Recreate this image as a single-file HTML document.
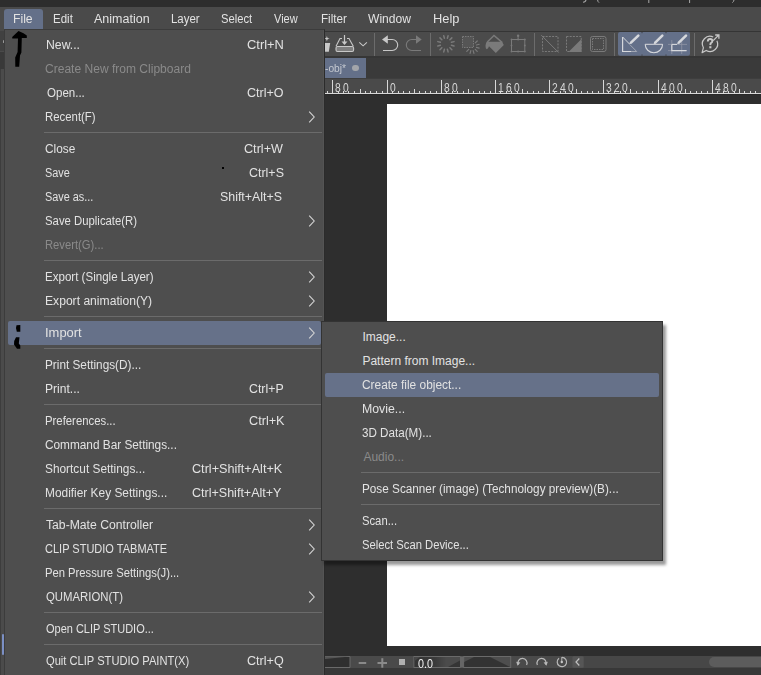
<!DOCTYPE html>
<html><head><meta charset="utf-8"><style>
html,body{margin:0;padding:0;width:761px;height:675px;overflow:hidden;background:#2e2e2e;position:relative}
body>div{position:absolute}
.t{font-family:"Liberation Sans", sans-serif;font-size:12px;line-height:14px;color:#e2e2e2;white-space:nowrap}
.r{font-family:"Liberation Sans",sans-serif;font-size:12.5px;line-height:12px;color:#d8d8d8;white-space:nowrap;transform:scaleX(0.82);transform-origin:0 0}
.z{font-family:"Liberation Sans",sans-serif;font-size:12.5px;line-height:12px;color:#f0f0f0;white-space:nowrap;transform:scaleX(0.86);transform-origin:0 0}
svg{display:block}
</style></head><body>
<div style="left:0px;top:0px;width:761px;height:7px;background:#2d2d2d"></div><div style="left:0px;top:7px;width:761px;height:24px;background:#4a4a4a"></div><div style="left:0px;top:31px;width:761px;height:1px;background:#353535"></div><div style="left:0px;top:32px;width:761px;height:24px;background:#4b4b4b"></div><div style="left:0px;top:56px;width:761px;height:2px;background:#363636"></div><div style="left:0px;top:58px;width:761px;height:20px;background:#3a3a3a"></div><div style="left:325px;top:58px;width:41px;height:20px;background:#647089"></div><div style="left:0px;top:78px;width:761px;height:1px;background:#3e3e3e"></div><div style="left:0px;top:79px;width:761px;height:14px;background:#4a4a4a"></div><div style="left:0px;top:93px;width:761px;height:1px;background:#d8d8d8"></div><div style="left:0px;top:94px;width:761px;height:562px;background:#2e2e2e"></div><div style="left:0px;top:94px;width:761px;height:1px;background:#282828"></div><div style="left:387px;top:104px;width:374px;height:542px;background:#ffffff"></div><div style="left:0px;top:656px;width:761px;height:12px;background:#4a4a4a"></div><div style="left:0px;top:668px;width:761px;height:7px;background:#383838"></div><svg style="position:absolute;left:0;top:0" width="761" height="8" viewBox="0 0 761 8"><path d="M586 0 Q585.5 2.2 583 2.2" fill="none" stroke="#a8a8a8" stroke-width="1.1"/><path d="M597.6 0 Q597.8 1.8 599 2.6" fill="none" stroke="#a8a8a8" stroke-width="1"/><path d="M648.8 0 L648.8 3 M689.6 0 L689.6 3" fill="none" stroke="#a8a8a8" stroke-width="1"/><path d="M734 0 Q733.6 1.8 732.4 2.6" fill="none" stroke="#a8a8a8" stroke-width="1"/></svg><div class="t" style="left:53.34px;top:12px;transform:scaleX(0.9600);transform-origin:0 0;">Edit</div><div class="t" style="left:94.00px;top:12px;transform:scaleX(1.0415);transform-origin:0 0;">Animation</div><div class="t" style="left:171.04px;top:12px;transform:scaleX(0.9552);transform-origin:0 0;">Layer</div><div class="t" style="left:220.67px;top:12px;transform:scaleX(0.9344);transform-origin:0 0;">Select</div><div class="t" style="left:274.30px;top:12px;transform:scaleX(0.9192);transform-origin:0 0;">View</div><div class="t" style="left:320.63px;top:12px;transform:scaleX(0.9692);transform-origin:0 0;">Filter</div><div class="t" style="left:368.30px;top:12px;transform:scaleX(1.0047);transform-origin:0 0;">Window</div><div class="t" style="left:432.53px;top:12px;transform:scaleX(1.0696);transform-origin:0 0;">Help</div><div class="t" style="left:325px;top:61px;color:#c4c8d0;font-size:11px;transform:scaleX(0.93);transform-origin:0 0">-obj*</div><div style="left:352.4px;top:64.9px;width:6.2px;height:6.2px;border-radius:50%;background:#a3a5aa"></div><div class="r" style="left:335.4px;top:82px">8</div><div class="r" style="left:343.4px;top:82px">0</div><div class="r" style="left:390.4px;top:82px">0</div><div class="r" style="left:444.4px;top:82px">8</div><div class="r" style="left:452.4px;top:82px">0</div><div class="r" style="left:498.4px;top:82px">1</div><div class="r" style="left:506.4px;top:82px">6</div><div class="r" style="left:514.4px;top:82px">0</div><div class="r" style="left:552.4px;top:82px">2</div><div class="r" style="left:560.4px;top:82px">4</div><div class="r" style="left:568.4px;top:82px">0</div><div class="r" style="left:606.4px;top:82px">3</div><div class="r" style="left:614.4px;top:82px">2</div><div class="r" style="left:622.4px;top:82px">0</div><div class="r" style="left:661.4px;top:82px">4</div><div class="r" style="left:669.4px;top:82px">0</div><div class="r" style="left:677.4px;top:82px">0</div><div class="r" style="left:715.4px;top:82px">4</div><div class="r" style="left:723.4px;top:82px">8</div><div class="r" style="left:731.4px;top:82px">0</div><svg style="position:absolute;left:0;top:0" width="761" height="675" viewBox="0 0 761 675"><line x1="374.5" y1="33" x2="374.5" y2="56" stroke="#6c6c6c" stroke-width="1"/><line x1="430.5" y1="33" x2="430.5" y2="56" stroke="#6c6c6c" stroke-width="1"/><line x1="534.5" y1="33" x2="534.5" y2="56" stroke="#6c6c6c" stroke-width="1"/><line x1="614.5" y1="33" x2="614.5" y2="56" stroke="#6c6c6c" stroke-width="1"/><line x1="694.5" y1="33" x2="694.5" y2="56" stroke="#6c6c6c" stroke-width="1"/><path d="M326.9 36 L327.6 38 L329.6 38.6 L327.6 39.3 L326.9 41.3 L326.2 39.3 L324.2 38.6 L326.2 38 Z" fill="#c8c8c8"/><path d="M325 43 L330.2 43 L328.8 51.7 L325 51.7 Z" fill="#c8c8c8"/><line x1="344.5" y1="35" x2="344.5" y2="43" stroke="#c8c8c8" stroke-width="1.2"/><path d="M341.5 41.5 L347.5 41.5 L344.5 45 Z" fill="#c8c8c8"/><path d="M342 38.5 L340 38.5 L336 46.2 M347 38.5 L349 38.5 L353.3 46.2" fill="none" stroke="#c8c8c8" stroke-width="1.1"/><rect x="336" y="46.5" width="17.6" height="5" rx="1.5" fill="#7e7e7e" stroke="#c8c8c8" stroke-width="1.1"/><path d="M359.3 42.3 L363.1 45.8 L366.9 42.3" fill="none" stroke="#c8c8c8" stroke-width="1.1"/><path d="M382 39.5 L387.8 35.2 L387.8 43.8 Z" fill="#c8c8c8"/><path d="M387 39.5 L392.2 39.5 A5.5 5.5 0 0 1 392.2 50.5 L383 50.5" fill="none" stroke="#c8c8c8" stroke-width="1.1"/><path d="M421.7 39.5 L416 35.2 L416 43.8 Z" fill="#7a7a7a"/><path d="M417 39.5 L411.8 39.5 A5.5 5.5 0 0 0 411.8 50.5 L421 50.5" fill="none" stroke="#7a7a7a" stroke-width="1.1"/><line x1="451.41" y1="45.28" x2="454.01" y2="45.97" stroke="#7a7a7a" stroke-width="1.5" stroke-linecap="round"/><line x1="449.93" y1="47.83" x2="451.84" y2="49.74" stroke="#7a7a7a" stroke-width="1.5" stroke-linecap="round"/><line x1="447.38" y1="49.31" x2="448.07" y2="51.91" stroke="#7a7a7a" stroke-width="1.5" stroke-linecap="round"/><line x1="444.42" y1="49.31" x2="443.73" y2="51.91" stroke="#7a7a7a" stroke-width="1.5" stroke-linecap="round"/><line x1="441.87" y1="47.83" x2="439.96" y2="49.74" stroke="#7a7a7a" stroke-width="1.5" stroke-linecap="round"/><line x1="440.39" y1="45.28" x2="437.79" y2="45.97" stroke="#7a7a7a" stroke-width="1.5" stroke-linecap="round"/><line x1="440.39" y1="42.32" x2="437.79" y2="41.63" stroke="#7a7a7a" stroke-width="1.5" stroke-linecap="round"/><line x1="441.87" y1="39.77" x2="439.96" y2="37.86" stroke="#7a7a7a" stroke-width="1.5" stroke-linecap="round"/><line x1="444.42" y1="38.29" x2="443.73" y2="35.69" stroke="#7a7a7a" stroke-width="1.5" stroke-linecap="round"/><line x1="447.38" y1="38.29" x2="448.07" y2="35.69" stroke="#7a7a7a" stroke-width="1.5" stroke-linecap="round"/><line x1="449.93" y1="39.77" x2="451.84" y2="37.86" stroke="#7a7a7a" stroke-width="1.5" stroke-linecap="round"/><line x1="451.41" y1="42.32" x2="454.01" y2="41.63" stroke="#7a7a7a" stroke-width="1.5" stroke-linecap="round"/><line x1="475.25" y1="42.95" x2="477.23" y2="40.97" stroke="#7a7a7a" stroke-width="1.2" stroke-linecap="round"/><line x1="476.44" y1="45.01" x2="479.15" y2="44.28" stroke="#7a7a7a" stroke-width="1.2" stroke-linecap="round"/><line x1="476.44" y1="47.39" x2="479.15" y2="48.12" stroke="#7a7a7a" stroke-width="1.2" stroke-linecap="round"/><line x1="475.25" y1="49.45" x2="477.23" y2="51.43" stroke="#7a7a7a" stroke-width="1.2" stroke-linecap="round"/><line x1="473.19" y1="50.64" x2="473.92" y2="53.35" stroke="#7a7a7a" stroke-width="1.2" stroke-linecap="round"/><line x1="470.81" y1="50.64" x2="470.08" y2="53.35" stroke="#7a7a7a" stroke-width="1.2" stroke-linecap="round"/><line x1="468.75" y1="49.45" x2="466.77" y2="51.43" stroke="#7a7a7a" stroke-width="1.2" stroke-linecap="round"/><rect x="462.5" y="36.5" width="11" height="11" fill="#555" stroke="#7a7a7a" stroke-width="1" stroke-dasharray="1.5 1"/><path d="M487.3 42 L494 35.4 L502.3 42.6" fill="none" stroke="#7a7a7a" stroke-width="1.4"/><path d="M486.6 41.8 L502 41.8 L503.8 45 L495.8 53 L489 46.2 Q487.5 50.5 486 48.5 Q484.8 46 486.6 41.8 Z" fill="#7a7a7a"/><rect x="511.5" y="39.5" width="13.3" height="12" fill="none" stroke="#7a7a7a" stroke-width="1"/><line x1="518.1" y1="36" x2="518.1" y2="39.5" stroke="#7a7a7a" stroke-width="1"/><circle cx="518.1" cy="35.7" r="1.2" fill="#7a7a7a"/><circle cx="511.5" cy="39.5" r="0.9" fill="#7a7a7a"/><circle cx="518.1" cy="39.5" r="0.9" fill="#7a7a7a"/><circle cx="524.8" cy="39.5" r="0.9" fill="#7a7a7a"/><circle cx="511.5" cy="45.5" r="0.9" fill="#7a7a7a"/><circle cx="524.8" cy="45.5" r="0.9" fill="#7a7a7a"/><circle cx="511.5" cy="51.5" r="0.9" fill="#7a7a7a"/><circle cx="518.1" cy="51.5" r="0.9" fill="#7a7a7a"/><circle cx="524.8" cy="51.5" r="0.9" fill="#7a7a7a"/><rect x="542.5" y="36.5" width="15.5" height="15" fill="none" stroke="#7a7a7a" stroke-width="1" stroke-dasharray="2 1.2"/><line x1="541.3" y1="35.2" x2="558.6" y2="52.5" stroke="#7a7a7a" stroke-width="1"/><rect x="566.5" y="36.5" width="14.7" height="15" fill="none" stroke="#7a7a7a" stroke-width="1" stroke-dasharray="2 1.2"/><path d="M581.5 39 L581.5 52 L568.5 52 Z" fill="#7a7a7a"/><rect x="590.5" y="36.5" width="15.5" height="15" rx="2" fill="none" stroke="#7a7a7a" stroke-width="1"/><rect x="592.5" y="38.5" width="11" height="11" fill="none" stroke="#7a7a7a" stroke-width="1" stroke-dasharray="1.5 1"/><rect x="618" y="32" width="72" height="23.7" rx="2" fill="#647089"/><rect x="641.5" y="32" width="1" height="1.2" fill="#3d3f45"/><rect x="641.5" y="54.5" width="1" height="1.2" fill="#3d3f45"/><rect x="665.5" y="32" width="1" height="1.2" fill="#3d3f45"/><rect x="665.5" y="54.5" width="1" height="1.2" fill="#3d3f45"/><path d="M622.6 37 L622.6 51.5 L631 51.5" fill="none" stroke="#d6d8dc" stroke-width="1.2"/><path d="M631 51.5 L636.7 51.5 L629.5 44.3" fill="none" stroke="#a8adb8" stroke-width="0.9"/><line x1="622.6" y1="37" x2="629.5" y2="44" stroke="#d6d8dc" stroke-width="1"/><line x1="638.3" y1="35.6" x2="631" y2="42.6" stroke="#d6d8dc" stroke-width="2.6" stroke-linecap="round"/><line x1="631" y1="42.6" x2="629.6" y2="44.0" stroke="#d6d8dc" stroke-width="1"/><path d="M645.2 44.3 L654 44.3 M654 44.3 L662.6 44.3" fill="none" stroke="#d6d8dc" stroke-width="1"/><path d="M645.2 44.3 A8.7 8.4 0 0 0 662.6 44.3" fill="none" stroke="#d6d8dc" stroke-width="1.1"/><line x1="662.3" y1="35.6" x2="655.2" y2="42.6" stroke="#d6d8dc" stroke-width="2.6" stroke-linecap="round"/><line x1="655.2" y1="42.6" x2="653.8000000000001" y2="44.0" stroke="#d6d8dc" stroke-width="1"/><path d="M668 44.4 L687 44.4 M668 50.6 L687 50.6 M681.7 40 L681.7 54 M671.8 40 L671.8 54" fill="none" stroke="#9096a4" stroke-width="0.8"/><path d="M671.8 44.4 L671.8 50.6 L686.5 50.6" fill="none" stroke="#d6d8dc" stroke-width="1.2"/><path d="M671.8 44.4 L677 44.4" fill="none" stroke="#d6d8dc" stroke-width="1.1"/><line x1="686" y1="35.6" x2="678.8" y2="42.6" stroke="#d6d8dc" stroke-width="2.6" stroke-linecap="round"/><line x1="678.8" y1="42.6" x2="677.4" y2="44.0" stroke="#d6d8dc" stroke-width="1"/><path d="M716.89 40.69 A7.6 7.6 0 0 1 706.2 50.48 L702.1 52.6 L703.42 47.7 A7.6 7.6 0 0 1 713.21 37.01" fill="none" stroke="#c8c8c8" stroke-width="1.2" stroke-linejoin="round"/><path d="M713.2 40.6 L718.4 35.4 M715.2 35 L718.9 35 L718.9 38.7" fill="none" stroke="#c8c8c8" stroke-width="1.3"/><path d="M707.8 41.4 Q707.8 39 710.1 39 Q712.4 39 712.4 41.1 Q712.4 42.5 710.6 43.4 L710.3 45.2" fill="none" stroke="#c8c8c8" stroke-width="1.9"/><rect x="709.3" y="46.2" width="2.1" height="2.1" fill="#c8c8c8"/><line x1="327.5" y1="91" x2="327.5" y2="93" stroke="#d8d8d8" stroke-width="1"/><line x1="332.5" y1="80" x2="332.5" y2="93" stroke="#d8d8d8" stroke-width="1"/><line x1="338.5" y1="91" x2="338.5" y2="93" stroke="#d8d8d8" stroke-width="1"/><line x1="343.5" y1="91" x2="343.5" y2="93" stroke="#d8d8d8" stroke-width="1"/><line x1="348.5" y1="91" x2="348.5" y2="93" stroke="#d8d8d8" stroke-width="1"/><line x1="354.5" y1="91" x2="354.5" y2="93" stroke="#d8d8d8" stroke-width="1"/><line x1="360.5" y1="89" x2="360.5" y2="93" stroke="#d8d8d8" stroke-width="1"/><line x1="365.5" y1="91" x2="365.5" y2="93" stroke="#d8d8d8" stroke-width="1"/><line x1="370.5" y1="91" x2="370.5" y2="93" stroke="#d8d8d8" stroke-width="1"/><line x1="376.5" y1="91" x2="376.5" y2="93" stroke="#d8d8d8" stroke-width="1"/><line x1="382.5" y1="91" x2="382.5" y2="93" stroke="#d8d8d8" stroke-width="1"/><line x1="387.5" y1="80" x2="387.5" y2="93" stroke="#d8d8d8" stroke-width="1"/><line x1="392.5" y1="91" x2="392.5" y2="93" stroke="#d8d8d8" stroke-width="1"/><line x1="398.5" y1="91" x2="398.5" y2="93" stroke="#d8d8d8" stroke-width="1"/><line x1="403.5" y1="91" x2="403.5" y2="93" stroke="#d8d8d8" stroke-width="1"/><line x1="409.5" y1="91" x2="409.5" y2="93" stroke="#d8d8d8" stroke-width="1"/><line x1="414.5" y1="89" x2="414.5" y2="93" stroke="#d8d8d8" stroke-width="1"/><line x1="419.5" y1="91" x2="419.5" y2="93" stroke="#d8d8d8" stroke-width="1"/><line x1="425.5" y1="91" x2="425.5" y2="93" stroke="#d8d8d8" stroke-width="1"/><line x1="430.5" y1="91" x2="430.5" y2="93" stroke="#d8d8d8" stroke-width="1"/><line x1="436.5" y1="91" x2="436.5" y2="93" stroke="#d8d8d8" stroke-width="1"/><line x1="441.5" y1="80" x2="441.5" y2="93" stroke="#d8d8d8" stroke-width="1"/><line x1="446.5" y1="91" x2="446.5" y2="93" stroke="#d8d8d8" stroke-width="1"/><line x1="452.5" y1="91" x2="452.5" y2="93" stroke="#d8d8d8" stroke-width="1"/><line x1="457.5" y1="91" x2="457.5" y2="93" stroke="#d8d8d8" stroke-width="1"/><line x1="463.5" y1="91" x2="463.5" y2="93" stroke="#d8d8d8" stroke-width="1"/><line x1="468.5" y1="89" x2="468.5" y2="93" stroke="#d8d8d8" stroke-width="1"/><line x1="473.5" y1="91" x2="473.5" y2="93" stroke="#d8d8d8" stroke-width="1"/><line x1="479.5" y1="91" x2="479.5" y2="93" stroke="#d8d8d8" stroke-width="1"/><line x1="484.5" y1="91" x2="484.5" y2="93" stroke="#d8d8d8" stroke-width="1"/><line x1="490.5" y1="91" x2="490.5" y2="93" stroke="#d8d8d8" stroke-width="1"/><line x1="495.5" y1="80" x2="495.5" y2="93" stroke="#d8d8d8" stroke-width="1"/><line x1="500.5" y1="91" x2="500.5" y2="93" stroke="#d8d8d8" stroke-width="1"/><line x1="506.5" y1="91" x2="506.5" y2="93" stroke="#d8d8d8" stroke-width="1"/><line x1="511.5" y1="91" x2="511.5" y2="93" stroke="#d8d8d8" stroke-width="1"/><line x1="517.5" y1="91" x2="517.5" y2="93" stroke="#d8d8d8" stroke-width="1"/><line x1="522.5" y1="89" x2="522.5" y2="93" stroke="#d8d8d8" stroke-width="1"/><line x1="527.5" y1="91" x2="527.5" y2="93" stroke="#d8d8d8" stroke-width="1"/><line x1="533.5" y1="91" x2="533.5" y2="93" stroke="#d8d8d8" stroke-width="1"/><line x1="538.5" y1="91" x2="538.5" y2="93" stroke="#d8d8d8" stroke-width="1"/><line x1="544.5" y1="91" x2="544.5" y2="93" stroke="#d8d8d8" stroke-width="1"/><line x1="549.5" y1="80" x2="549.5" y2="93" stroke="#d8d8d8" stroke-width="1"/><line x1="554.5" y1="91" x2="554.5" y2="93" stroke="#d8d8d8" stroke-width="1"/><line x1="560.5" y1="91" x2="560.5" y2="93" stroke="#d8d8d8" stroke-width="1"/><line x1="565.5" y1="91" x2="565.5" y2="93" stroke="#d8d8d8" stroke-width="1"/><line x1="571.5" y1="91" x2="571.5" y2="93" stroke="#d8d8d8" stroke-width="1"/><line x1="576.5" y1="89" x2="576.5" y2="93" stroke="#d8d8d8" stroke-width="1"/><line x1="581.5" y1="91" x2="581.5" y2="93" stroke="#d8d8d8" stroke-width="1"/><line x1="587.5" y1="91" x2="587.5" y2="93" stroke="#d8d8d8" stroke-width="1"/><line x1="592.5" y1="91" x2="592.5" y2="93" stroke="#d8d8d8" stroke-width="1"/><line x1="598.5" y1="91" x2="598.5" y2="93" stroke="#d8d8d8" stroke-width="1"/><line x1="603.5" y1="80" x2="603.5" y2="93" stroke="#d8d8d8" stroke-width="1"/><line x1="608.5" y1="91" x2="608.5" y2="93" stroke="#d8d8d8" stroke-width="1"/><line x1="614.5" y1="91" x2="614.5" y2="93" stroke="#d8d8d8" stroke-width="1"/><line x1="620.5" y1="91" x2="620.5" y2="93" stroke="#d8d8d8" stroke-width="1"/><line x1="625.5" y1="91" x2="625.5" y2="93" stroke="#d8d8d8" stroke-width="1"/><line x1="630.5" y1="89" x2="630.5" y2="93" stroke="#d8d8d8" stroke-width="1"/><line x1="636.5" y1="91" x2="636.5" y2="93" stroke="#d8d8d8" stroke-width="1"/><line x1="642.5" y1="91" x2="642.5" y2="93" stroke="#d8d8d8" stroke-width="1"/><line x1="647.5" y1="91" x2="647.5" y2="93" stroke="#d8d8d8" stroke-width="1"/><line x1="652.5" y1="91" x2="652.5" y2="93" stroke="#d8d8d8" stroke-width="1"/><line x1="658.5" y1="80" x2="658.5" y2="93" stroke="#d8d8d8" stroke-width="1"/><line x1="663.5" y1="91" x2="663.5" y2="93" stroke="#d8d8d8" stroke-width="1"/><line x1="669.5" y1="91" x2="669.5" y2="93" stroke="#d8d8d8" stroke-width="1"/><line x1="674.5" y1="91" x2="674.5" y2="93" stroke="#d8d8d8" stroke-width="1"/><line x1="680.5" y1="91" x2="680.5" y2="93" stroke="#d8d8d8" stroke-width="1"/><line x1="685.5" y1="89" x2="685.5" y2="93" stroke="#d8d8d8" stroke-width="1"/><line x1="690.5" y1="91" x2="690.5" y2="93" stroke="#d8d8d8" stroke-width="1"/><line x1="696.5" y1="91" x2="696.5" y2="93" stroke="#d8d8d8" stroke-width="1"/><line x1="701.5" y1="91" x2="701.5" y2="93" stroke="#d8d8d8" stroke-width="1"/><line x1="707.5" y1="91" x2="707.5" y2="93" stroke="#d8d8d8" stroke-width="1"/><line x1="712.5" y1="80" x2="712.5" y2="93" stroke="#d8d8d8" stroke-width="1"/><line x1="717.5" y1="91" x2="717.5" y2="93" stroke="#d8d8d8" stroke-width="1"/><line x1="723.5" y1="91" x2="723.5" y2="93" stroke="#d8d8d8" stroke-width="1"/><line x1="728.5" y1="91" x2="728.5" y2="93" stroke="#d8d8d8" stroke-width="1"/><line x1="734.5" y1="91" x2="734.5" y2="93" stroke="#d8d8d8" stroke-width="1"/><line x1="739.5" y1="89" x2="739.5" y2="93" stroke="#d8d8d8" stroke-width="1"/><line x1="744.5" y1="91" x2="744.5" y2="93" stroke="#d8d8d8" stroke-width="1"/><line x1="750.5" y1="91" x2="750.5" y2="93" stroke="#d8d8d8" stroke-width="1"/><line x1="755.5" y1="91" x2="755.5" y2="93" stroke="#d8d8d8" stroke-width="1"/><rect x="325" y="656.5" width="25" height="11" fill="#2f2f2f"/><path d="M325 656.5 L350 656.5 L350 667.5 L325 667.5" fill="none" stroke="#6a6a6a" stroke-width="1"/><path d="M325 659 L350 656.5 L325 656.5 Z" fill="#555"/><rect x="358.7" y="662" width="7.5" height="2" fill="#8a8a8a"/><rect x="377.5" y="662" width="9.5" height="2" fill="#8a8a8a"/><rect x="381.3" y="658.2" width="2" height="9.5" fill="#8a8a8a"/><rect x="399" y="659" width="6" height="6" fill="#b0b0b0"/><rect x="414" y="656.5" width="46" height="11" fill="#4b4b4b" stroke="#6a6a6a" stroke-width="1"/><defs><linearGradient id="g1" x1="0" y1="0" x2="1" y2="0"><stop offset="0" stop-color="#333"/><stop offset="0.45" stop-color="#3a3a3a"/><stop offset="0.7" stop-color="#4b4b4b"/></linearGradient></defs><rect x="414.5" y="657" width="45.5" height="10" fill="url(#g1)"/><path d="M414.5 657 L420 657 L414.5 661 Z" fill="#474747"/><path d="M448 667 L460 667 L460 660.5 Z" fill="#353535"/><rect x="460" y="656.5" width="3.5" height="11" fill="#666"/><rect x="463.7" y="656.5" width="47" height="11" fill="#4e4e4e" stroke="#6a6a6a" stroke-width="1"/><path d="M464.2 662 L474 657 L490 657 L510.2 667 L464.2 667 Z" fill="#333"/><path d="M518.2 664.8 A4.6 4.6 0 1 1 526.6 665" fill="none" stroke="#b8b8b8" stroke-width="1.2"/><path d="M516.2 661.8 L520.4 662.5 L517.6 665.8 Z" fill="#b8b8b8"/><path d="M537.4 665 A4.6 4.6 0 1 1 545.8 664.8" fill="none" stroke="#b8b8b8" stroke-width="1.2"/><path d="M547.8 661.8 L543.6 662.5 L546.4 665.8 Z" fill="#b8b8b8"/><path d="M559 658.3 A4.7 4.7 0 1 0 562 657.3" fill="none" stroke="#b8b8b8" stroke-width="1.2"/><circle cx="561.8" cy="662" r="1.2" fill="#c8c8c8"/><line x1="561.8" y1="657" x2="561.8" y2="661" stroke="#b8b8b8" stroke-width="1"/><rect x="572.4" y="656.3" width="11.2" height="11.5" rx="1.5" fill="#565656"/><path d="M579.3 658.5 L576 662 L579.3 665.5" fill="none" stroke="#c0c0c0" stroke-width="1.2"/><rect x="584" y="656" width="177" height="12" fill="#474747"/><rect x="709" y="657" width="60" height="10" rx="5" fill="#5c5c5c"/></svg><div class="z" style="left:418.3px;top:658px">0.0</div><div style="left:0px;top:31px;width:4px;height:20px;background:#414141"></div><div style="left:0px;top:51px;width:4px;height:1px;background:#4a4a4a"></div><div style="left:0px;top:52px;width:4px;height:17px;background:#393939"></div><div style="left:0px;top:69px;width:1px;height:606px;background:#3d3d3d"></div><div style="left:1px;top:69px;width:3px;height:606px;background:#4b4b4b"></div><div style="left:2.8px;top:39.5px;width:1.2px;height:3px;background:#9a9a9a;border-radius:1px"></div><div style="left:1.5px;top:634px;width:2px;height:21px;background:#7b8fc4;border-radius:1px"></div><div style="left:4px;top:29px;width:321px;height:646px;background:#4e4e4e;border-left:1px solid #3c3c3c;border-top:1px solid #3c3c3c;border-right:1px solid #2b2b2b;box-sizing:border-box"></div><div style="left:323px;top:30px;width:1px;height:645px;background:#545454"></div><div style="left:4px;top:9px;width:39px;height:20px;background:#647089;border-radius:3px 3px 0 0"></div><div class="t" style="left:13.18px;top:12px;transform:scaleX(1.0167);transform-origin:0 0;">File</div><div class="t" style="left:45.68px;top:38px;transform:scaleX(1.0194);transform-origin:0 0;color:#e2e2e2">New...</div><div class="t" style="left:247.02px;top:38px;transform:scaleX(1.0758);transform-origin:0 0;color:#e2e2e2">Ctrl+N</div><div class="t" style="left:45.30px;top:62px;transform:scaleX(1.0035);transform-origin:0 0;color:#8a8a8a">Create New from Clipboard</div><div class="t" style="left:46.50px;top:86px;transform:scaleX(0.9605);transform-origin:0 0;color:#e2e2e2">Open...</div><div class="t" style="left:247.06px;top:86px;transform:scaleX(1.0441);transform-origin:0 0;color:#e2e2e2">Ctrl+O</div><div class="t" style="left:45.45px;top:110px;transform:scaleX(0.9481);transform-origin:0 0;color:#e2e2e2">Recent(F)</div><div style="left:308px;top:111px;width:8px;height:12px"><svg width="8" height="12" viewBox="0 0 8 12"><path d="M1.2 0.6 L6.2 6 L1.2 11.4" fill="none" stroke="#d4d4d4" stroke-width="1.1"/></svg></div><div style="left:44px;top:132px;width:278px;height:1px;background:#6b6b6b"></div><div class="t" style="left:45.41px;top:142px;transform:scaleX(0.9862);transform-origin:0 0;color:#e2e2e2">Close</div><div class="t" style="left:244.25px;top:142px;transform:scaleX(1.0528);transform-origin:0 0;color:#e2e2e2">Ctrl+W</div><div class="t" style="left:45.49px;top:166px;transform:scaleX(0.9077);transform-origin:0 0;color:#e2e2e2">Save</div><div class="t" style="left:248.96px;top:166px;transform:scaleX(1.0375);transform-origin:0 0;color:#e2e2e2">Ctrl+S</div><div class="t" style="left:45.49px;top:190px;transform:scaleX(0.9059);transform-origin:0 0;color:#e2e2e2">Save as...</div><div class="t" style="left:220.37px;top:190px;transform:scaleX(1.0322);transform-origin:0 0;color:#e2e2e2">Shift+Alt+S</div><div class="t" style="left:45.45px;top:214px;transform:scaleX(0.9458);transform-origin:0 0;color:#e2e2e2">Save Duplicate(R)</div><div style="left:308px;top:215px;width:8px;height:12px"><svg width="8" height="12" viewBox="0 0 8 12"><path d="M1.2 0.6 L6.2 6 L1.2 11.4" fill="none" stroke="#d4d4d4" stroke-width="1.1"/></svg></div><div class="t" style="left:45.46px;top:238px;transform:scaleX(0.9361);transform-origin:0 0;color:#8a8a8a">Revert(G)...</div><div style="left:44px;top:260px;width:278px;height:1px;background:#6b6b6b"></div><div class="t" style="left:45.44px;top:270px;transform:scaleX(0.9631);transform-origin:0 0;color:#e2e2e2">Export (Single Layer)</div><div style="left:308px;top:271px;width:8px;height:12px"><svg width="8" height="12" viewBox="0 0 8 12"><path d="M1.2 0.6 L6.2 6 L1.2 11.4" fill="none" stroke="#d4d4d4" stroke-width="1.1"/></svg></div><div class="t" style="left:45.39px;top:294px;transform:scaleX(1.0096);transform-origin:0 0;color:#e2e2e2">Export animation(Y)</div><div style="left:308px;top:295px;width:8px;height:12px"><svg width="8" height="12" viewBox="0 0 8 12"><path d="M1.2 0.6 L6.2 6 L1.2 11.4" fill="none" stroke="#d4d4d4" stroke-width="1.1"/></svg></div><div style="left:44px;top:316px;width:278px;height:1px;background:#6b6b6b"></div><div style="left:8px;top:321px;width:313px;height:24px;background:#667189;border-radius:2px"></div><div class="t" style="left:45.32px;top:326px;transform:scaleX(1.0788);transform-origin:0 0;color:#e2e2e2">Import</div><div style="left:308px;top:327px;width:8px;height:12px"><svg width="8" height="12" viewBox="0 0 8 12"><path d="M1.2 0.6 L6.2 6 L1.2 11.4" fill="none" stroke="#d4d4d4" stroke-width="1.1"/></svg></div><div style="left:44px;top:348px;width:278px;height:1px;background:#6b6b6b"></div><div class="t" style="left:45.42px;top:358px;transform:scaleX(0.9823);transform-origin:0 0;color:#e2e2e2">Print Settings(D)...</div><div class="t" style="left:45.39px;top:382px;transform:scaleX(1.0061);transform-origin:0 0;color:#e2e2e2">Print...</div><div class="t" style="left:249.17px;top:382px;transform:scaleX(1.0281);transform-origin:0 0;color:#e2e2e2">Ctrl+P</div><div style="left:44px;top:404px;width:278px;height:1px;background:#6b6b6b"></div><div class="t" style="left:45.45px;top:414px;transform:scaleX(0.9452);transform-origin:0 0;color:#e2e2e2">Preferences...</div><div class="t" style="left:249.14px;top:414px;transform:scaleX(1.0563);transform-origin:0 0;color:#e2e2e2">Ctrl+K</div><div class="t" style="left:45.42px;top:438px;transform:scaleX(0.9841);transform-origin:0 0;color:#e2e2e2">Command Bar Settings...</div><div class="t" style="left:45.41px;top:462px;transform:scaleX(0.9889);transform-origin:0 0;color:#e2e2e2">Shortcut Settings...</div><div class="t" style="left:192.25px;top:462px;transform:scaleX(1.0524);transform-origin:0 0;color:#e2e2e2">Ctrl+Shift+Alt+K</div><div class="t" style="left:45.41px;top:486px;transform:scaleX(0.9909);transform-origin:0 0;color:#e2e2e2">Modifier Key Settings...</div><div class="t" style="left:192.26px;top:486px;transform:scaleX(1.0440);transform-origin:0 0;color:#e2e2e2">Ctrl+Shift+Alt+Y</div><div style="left:44px;top:508px;width:278px;height:1px;background:#6b6b6b"></div><div class="t" style="left:46.40px;top:518px;transform:scaleX(1.0152);transform-origin:0 0;color:#e2e2e2">Tab-Mate Controller</div><div style="left:308px;top:519px;width:8px;height:12px"><svg width="8" height="12" viewBox="0 0 8 12"><path d="M1.2 0.6 L6.2 6 L1.2 11.4" fill="none" stroke="#d4d4d4" stroke-width="1.1"/></svg></div><div class="t" style="left:45.48px;top:542px;transform:scaleX(0.9174);transform-origin:0 0;color:#e2e2e2">CLIP STUDIO TABMATE</div><div style="left:308px;top:543px;width:8px;height:12px"><svg width="8" height="12" viewBox="0 0 8 12"><path d="M1.2 0.6 L6.2 6 L1.2 11.4" fill="none" stroke="#d4d4d4" stroke-width="1.1"/></svg></div><div class="t" style="left:45.46px;top:566px;transform:scaleX(0.9362);transform-origin:0 0;color:#e2e2e2">Pen Pressure Settings(J)...</div><div class="t" style="left:46.40px;top:590px;transform:scaleX(0.9457);transform-origin:0 0;color:#e2e2e2">QUMARION(T)</div><div style="left:308px;top:591px;width:8px;height:12px"><svg width="8" height="12" viewBox="0 0 8 12"><path d="M1.2 0.6 L6.2 6 L1.2 11.4" fill="none" stroke="#d4d4d4" stroke-width="1.1"/></svg></div><div style="left:44px;top:612px;width:278px;height:1px;background:#6b6b6b"></div><div class="t" style="left:46.40px;top:622px;transform:scaleX(0.9154);transform-origin:0 0;color:#e2e2e2">Open CLIP STUDIO...</div><div style="left:44px;top:644px;width:278px;height:1px;background:#6b6b6b"></div><div class="t" style="left:46.40px;top:654px;transform:scaleX(0.9279);transform-origin:0 0;color:#e2e2e2">Quit CLIP STUDIO PAINT(X)</div><div class="t" style="left:247.15px;top:654px;transform:scaleX(1.0471);transform-origin:0 0;color:#e2e2e2">Ctrl+Q</div><div style="left:222px;top:167px;width:1.5px;height:1.5px;background:#000"></div><div style="left:324px;top:325px;width:342px;height:240px;background:rgba(0,0,0,0.4);filter:blur(1.5px)"></div><div style="left:321px;top:321px;width:342px;height:240px;background:#4e4e4e;border:1px solid #333;box-sizing:border-box"></div><div class="t" style="left:362.40px;top:330px;transform:scaleX(1.0000);transform-origin:0 0;color:#e2e2e2">Image...</div><div class="t" style="left:362.40px;top:354px;transform:scaleX(1.0000);transform-origin:0 0;color:#e2e2e2">Pattern from Image...</div><div style="left:325px;top:373px;width:334px;height:24px;background:#667189;border-radius:2px"></div><div class="t" style="left:362.41px;top:378px;transform:scaleX(0.9918);transform-origin:0 0;color:#e2e2e2">Create file object...</div><div class="t" style="left:362.38px;top:402px;transform:scaleX(1.0250);transform-origin:0 0;color:#e2e2e2">Movie...</div><div class="t" style="left:362.43px;top:426px;transform:scaleX(0.9700);transform-origin:0 0;color:#e2e2e2">3D Data(M)...</div><div class="t" style="left:363.40px;top:450px;transform:scaleX(1.0000);transform-origin:0 0;color:#8a8a8a">Audio...</div><div style="left:361px;top:472px;width:299px;height:1px;background:#6b6b6b"></div><div class="t" style="left:362.42px;top:482px;transform:scaleX(0.9792);transform-origin:0 0;color:#e2e2e2">Pose Scanner (image) (Technology preview)(B)...</div><div style="left:361px;top:504px;width:299px;height:1px;background:#6b6b6b"></div><div class="t" style="left:362.46px;top:514px;transform:scaleX(0.9371);transform-origin:0 0;color:#e2e2e2">Scan...</div><div class="t" style="left:362.46px;top:538px;transform:scaleX(0.9366);transform-origin:0 0;color:#e2e2e2">Select Scan Device...</div><svg style="position:absolute;left:0;top:0" width="761" height="675" viewBox="0 0 761 675"><path d="M18.5 31 L23.5 33.2 L26.8 35.5 L26.8 38 L21.8 38 L21.4 52.5 L20 55.5 L19.2 66.7 L15.3 66.7 L15.2 57.5 L17.6 52 L18 38.6 L12.3 38.6 L12.2 37 Z" fill="#000"/><path d="M16.5 325.2 L20.3 325 L20.3 331.8 L16.8 331.8 L16 328 Z" fill="#000"/><path d="M16 337.2 L19.5 337.2 L18.8 343.5 L20.3 345.5 L20.3 348.8 L17 348.8 L14 344.5 L14.2 341 Z" fill="#000"/></svg>
</body></html>
